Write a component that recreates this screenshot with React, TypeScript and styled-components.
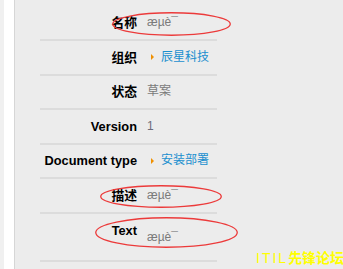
import React from "react";
import styled, { createGlobalStyle } from "styled-components";

const Global = createGlobalStyle`
  html, body { margin: 0; padding: 0; background: #ececec; }
  body { font-family: "Liberation Sans", "Noto Sans CJK SC", sans-serif; }
`;

const Page = styled.div`
  position: relative;
  display: flex;
  width: 343px;
  height: 269px;
  overflow: hidden;
  background: #ececec;
`;

const Gutter = styled.div`
  width: 10px;
  flex: none;
  border-left: 4px solid #f0f0f0;
  border-right: 1px solid #d6d6d6;
  background: #ffffff;
`;

const Content = styled.div`
  padding: 6px 0 0 25px;
`;

const Table = styled.div`
  width: 177px;
  display: flex;
  flex-direction: column;
`;

const Row = styled.div<{ $tall?: boolean }>`
  position: relative;
  display: grid;
  grid-template-columns: 97px 1fr;
  column-gap: 10px;
  align-items: ${(p) => (p.$tall ? "start" : "center")};
  height: ${(p) => (p.$tall ? "46.5px" : "32.5px")};
  border-bottom: 2px solid #dcdcdc;
  &:first-child { height: 33px; }
`;

const Label = styled.div<{ $tall?: boolean }>`
  text-align: right;
  font-weight: bold;
  font-size: 12.8px;
  color: #000;
  white-space: nowrap;
  padding-top: ${(p) => (p.$tall ? "9px" : "0")};
  line-height: 15px;
`;

const Value = styled.div<{ $tall?: boolean; $tone?: "muted" | "num" }>`
  font-size: 12px;
  line-height: 15px;
  white-space: nowrap;
  color: ${(p) => (p.$tone === "num" ? "#6b6b7a" : "#7a7a7a")};
  padding-top: ${(p) => (p.$tall ? "16px" : "0")};
  display: flex;
  align-items: center;
`;

const LinkValue = styled.a`
  display: flex;
  align-items: center;
  gap: 7px;
  padding-left: 4px;
  font-size: 12px;
  line-height: 15px;
  color: #1a8fcf;
  text-decoration: none;
  white-space: nowrap;
`;

const Arrow = styled.span`
  width: 0;
  height: 0;
  border-top: 3px solid transparent;
  border-bottom: 3px solid transparent;
  border-left: 3px solid #f09000;
`;

const Mark = styled.svg`
  position: absolute;
  pointer-events: none;
  overflow: visible;
`;

const Watermark = styled.div`
  position: absolute;
  left: 256px;
  top: 250px;
  font-size: 14px;
  font-weight: bold;
  line-height: 16px;
  color: #ffff00;
  white-space: nowrap;
  font-family: "Liberation Sans", "Noto Sans CJK SC", sans-serif;
`;

const Latin = styled.span`
  font-weight: normal;
  letter-spacing: 2px;
`;

const Ellipse = ({ left, top, w, h }: { left: number; top: number; w: number; h: number }) => (
  <Mark style={{ left, top }} width={w} height={h} viewBox={`0 0 ${w} ${h}`}>
    <ellipse cx={w / 2} cy={h / 2} rx={w / 2 - 0.75} ry={h / 2 - 0.75} fill="none" stroke="#ec3a3a" strokeWidth={1.3} />
  </Mark>
);

const MOJI = "æµè¯";

export default function App() {
  return (
    <>
      <Global />
      <Page>
        <Gutter />
        <Content>
          <Table>
            <Row>
              <Label>名称</Label>
              <Value>{MOJI}</Value>
              <Ellipse left={72} top={6} w={119} h={24} />
            </Row>
            <Row>
              <Label>组织</Label>
              <LinkValue href="#"><Arrow />辰星科技</LinkValue>
            </Row>
            <Row>
              <Label>状态</Label>
              <Value>草案</Value>
            </Row>
            <Row>
              <Label>Version</Label>
              <Value $tone="num">1</Value>
            </Row>
            <Row>
              <Label>Document type</Label>
              <LinkValue href="#"><Arrow />安装部署</LinkValue>
            </Row>
            <Row>
              <Label>描述</Label>
              <Value>{MOJI}</Value>
              <Ellipse left={60} top={6} w={122} h={23} />
            </Row>
            <Row $tall>
              <Label $tall>Text</Label>
              <Value $tall>{MOJI}</Value>
              <Ellipse left={55} top={3} w={143} h={31} />
            </Row>
          </Table>
        </Content>
        <Watermark><Latin>ITIL</Latin>先锋论坛</Watermark>
      </Page>
    </>
  );
}
